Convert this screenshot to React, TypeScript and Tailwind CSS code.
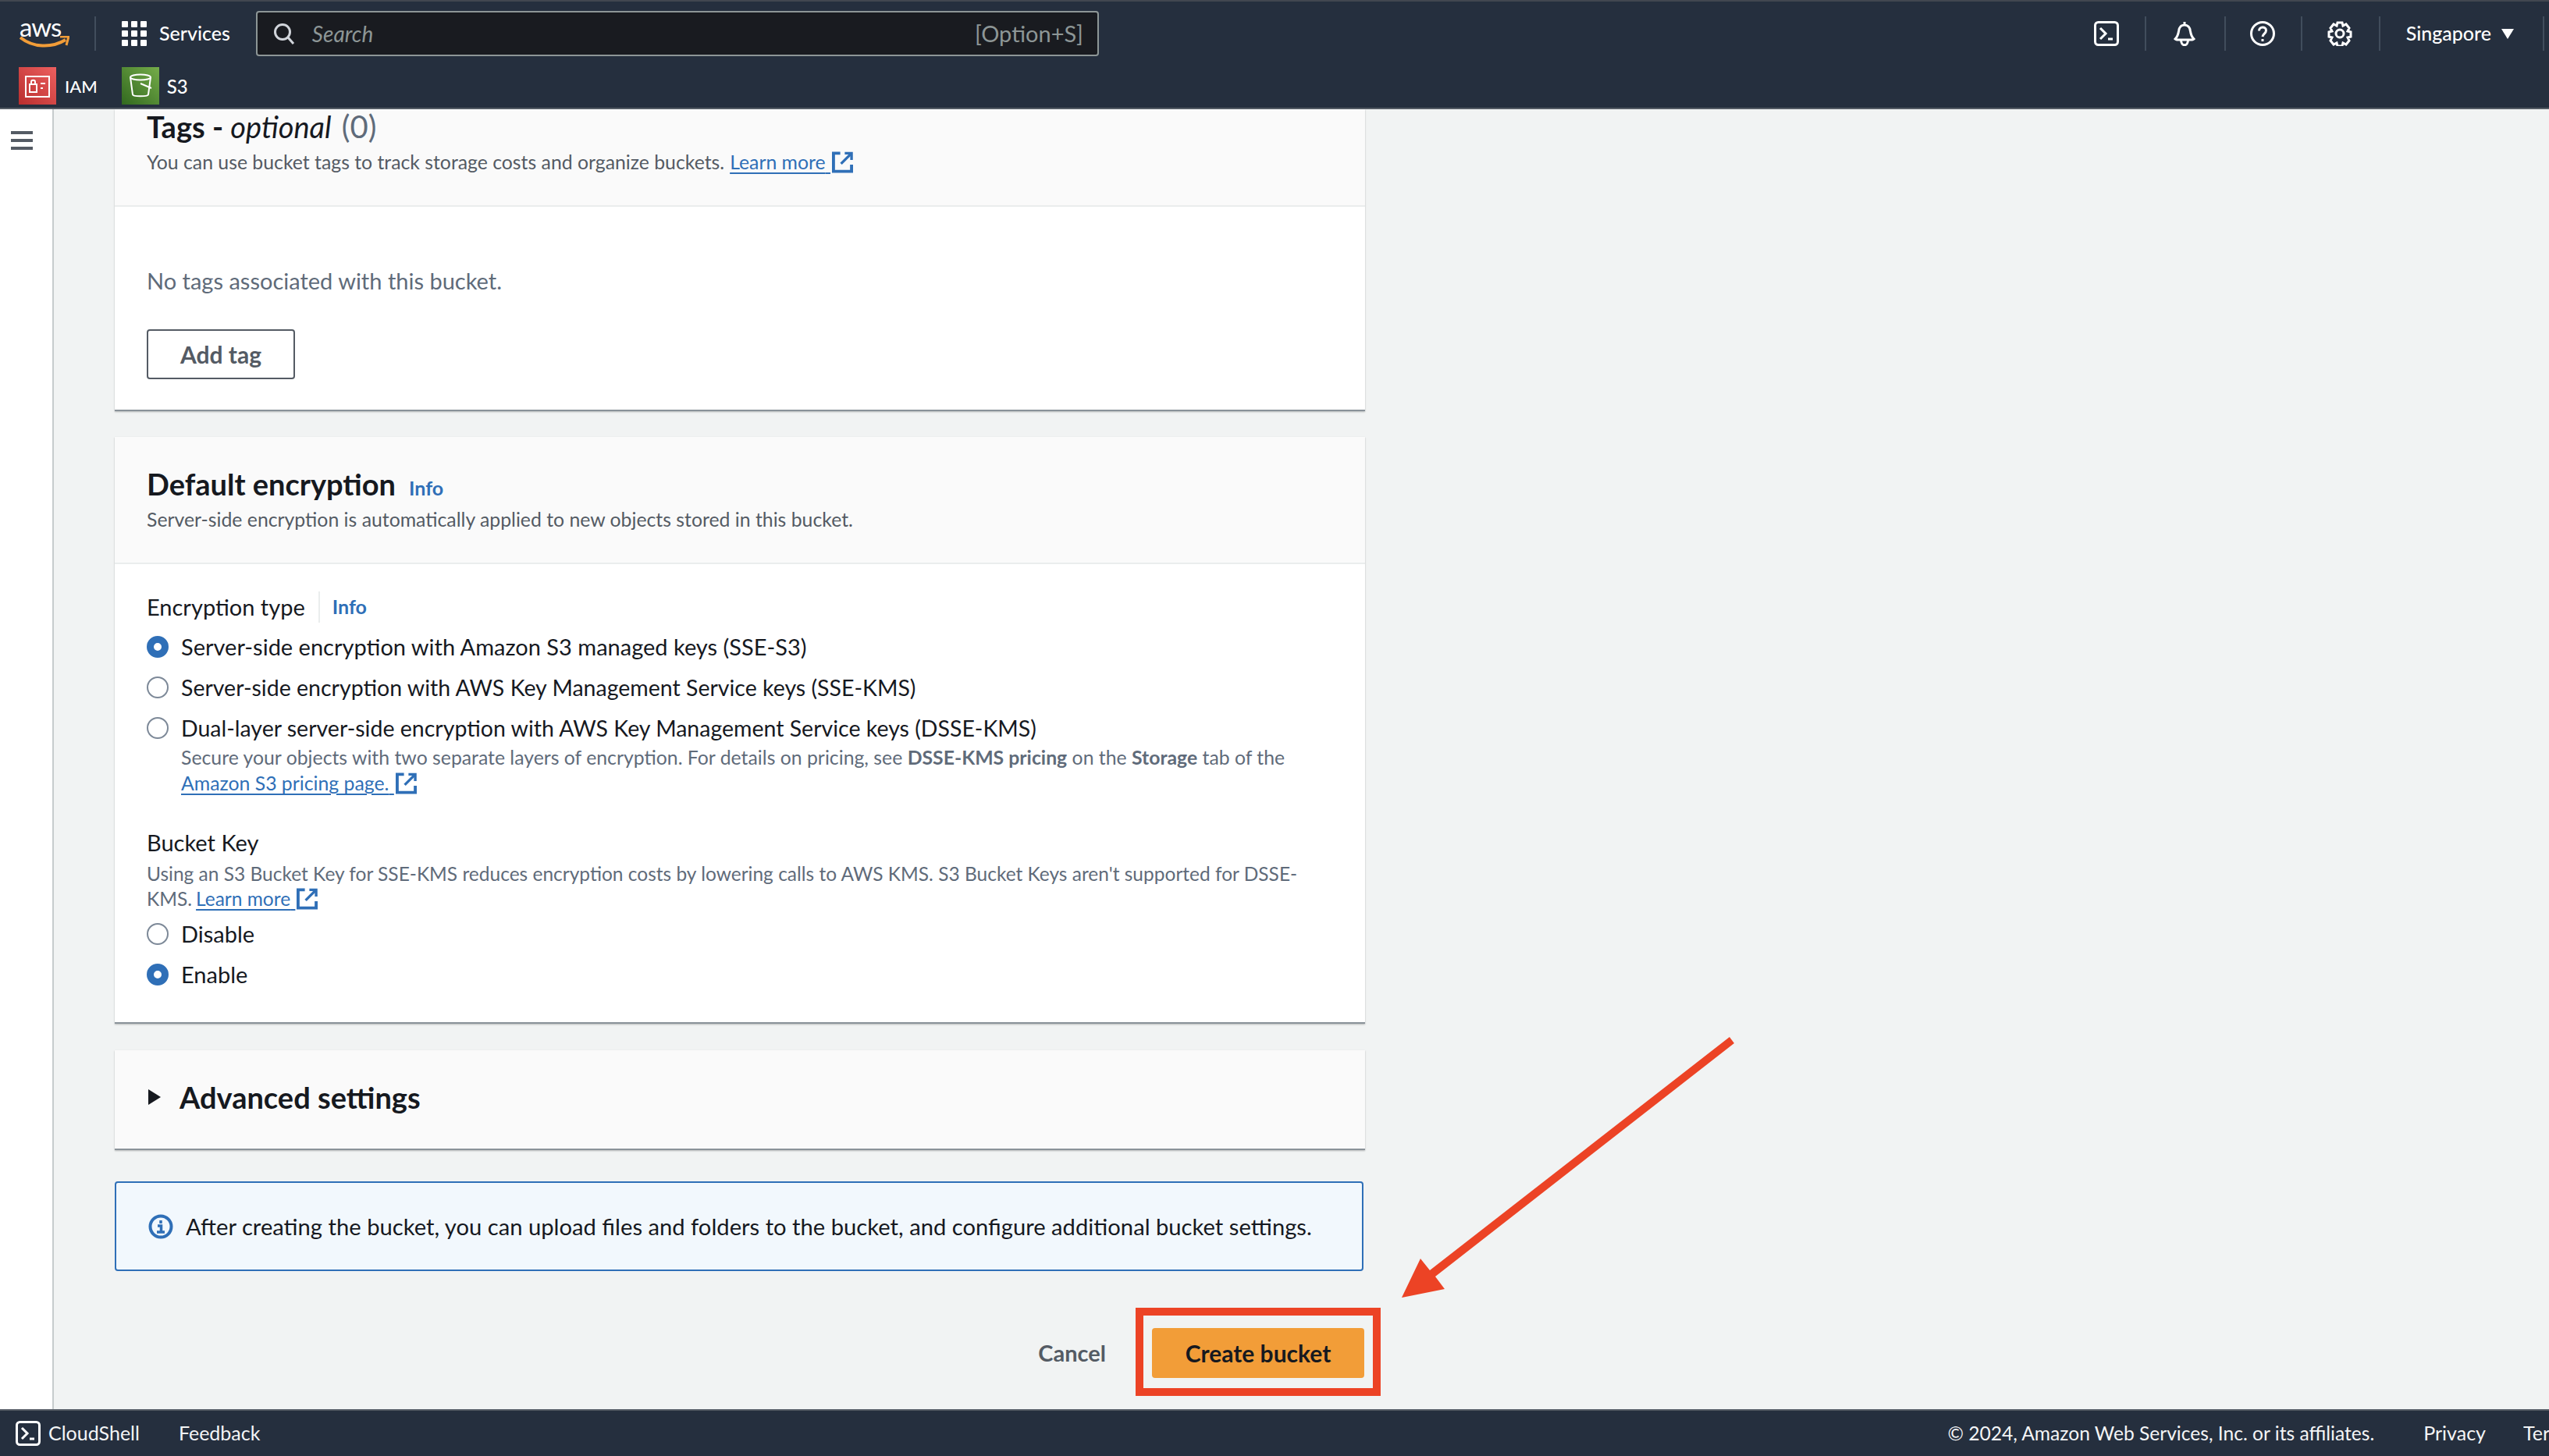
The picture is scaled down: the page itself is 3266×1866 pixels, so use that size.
const sans = "font-['Lato','Liberation_Sans',sans-serif]";

function ExternalIcon({ className }: { className?: string }) {
  return (
    <svg viewBox="0 0 28 28" className={className} fill="none" stroke="#2f6fb7" strokeWidth="4">
      <path d="M11 2H2v24h24v-9" />
      <path d="M17 2h9v9" strokeWidth="3.5" />
      <path d="M25 3 12 16" strokeWidth="3.5" />
    </svg>
  );
}

function LearnMore({ label }: { label: string }) {
  return (
    <span className="inline-flex items-center">
      <span className="text-[#2f6fb7] underline decoration-2 underline-offset-4">{label}{"\u00a0"}</span>
      <ExternalIcon className="ml-[2px] h-[28px] w-[27px]" />
    </span>
  );
}

function Radio({ checked, label, size = "text-[29px]" }: { checked?: boolean; label: string; size?: string }) {
  return (
    <div className="flex h-[52px] items-center">
      {checked ? (
        <span className="h-[28px] w-[28px] rounded-full border-[9px] border-[#2f6fb7] bg-white" />
      ) : (
        <span className="h-[28px] w-[28px] rounded-full border-2 border-[#7d8998] bg-white" />
      )}
      <span className={`ml-[16px] leading-[40px] text-[#16191f] ${size}`}>{label}</span>
    </div>
  );
}

function HeaderDivider({ x }: { x: string }) {
  return <span className={`h-[44px] w-[2px] bg-[#414d5c] ${x}`} />;
}

function GridDots() {
  return (
    <svg viewBox="0 0 32 32" className="h-[32px] w-[32px]" fill="#fff">
      {[0, 12, 24].map((y) =>
        [0, 12, 24].map((x) => <rect key={`${x}-${y}`} x={x} y={y} width="8" height="8" rx="1" />)
      )}
    </svg>
  );
}

function TerminalIcon({ className }: { className?: string }) {
  return (
    <svg viewBox="0 0 32 32" className={className} fill="none" stroke="#fff" strokeWidth="3">
      <rect x="1.5" y="1.5" width="29" height="29" rx="4" />
      <path d="m8 9 7 7-7 7" />
      <path d="M18 23h6" />
    </svg>
  );
}

function TopBar() {
  return (
    <header className="h-[140px] shrink-0 border-t-2 border-b-2 border-t-[#414750] border-b-[#545b64] bg-[#252f3e] text-white">
      <div className="flex h-[82px] items-center">
        <div className="relative ml-[25px] h-[42px] w-[64px]">
          <span className="absolute left-0 top-[-8px] text-[33px] leading-[40px] tracking-[-1px]">aws</span>
          <svg viewBox="0 0 64 18" className="absolute left-0 top-[24px] h-[18px] w-[64px]" fill="none">
            <path d="M1 2c16 13 40 14 58 3" stroke="#f29d38" strokeWidth="4" />
            <path d="M52 1h11l-3 11" stroke="#f29d38" strokeWidth="3" />
          </svg>
        </div>
        <span className="ml-[32px] h-[44px] w-[2px] bg-[#414d5c]" />
        <div className="ml-[33px]">
          <GridDots />
        </div>
        <span className="ml-[16px] text-[25px] font-medium">Services</span>
        <div className="ml-[33px] flex h-[58px] w-[1080px] items-center rounded-[4px] border-2 border-[#8d9696] bg-[#191b20] pl-[20px] pr-[18px]">
          <svg viewBox="0 0 28 28" className="h-[30px] w-[28px]" fill="none" stroke="#d1d5db" strokeWidth="3">
            <circle cx="12" cy="12" r="9.5" />
            <path d="m19 19 7 8" />
          </svg>
          <span className="ml-[22px] flex-1 text-[28px] italic text-[#8d9696]">Search</span>
          <span className="text-[29px] text-[#8d9696]">[Option+S]</span>
        </div>
        <div className="flex-1" />
        <TerminalIcon className="h-[32px] w-[32px]" />
        <HeaderDivider x="ml-[33px]" />
        <svg viewBox="0 0 32 32" className="ml-[33px] h-[32px] w-[32px]" fill="none" stroke="#fff" strokeWidth="3">
          <path d="M16 1v3M4 23c3-3 4-6 4.500-10C9 8 12 5 16 5s7 3 7.500 8c.5 4 1.500 7 4.500 10 0 0-1 1-2 1H6c-1 0-2-1-2-1Z" />
          <path d="M11.500 24c0 9 9 9 9 0" />
        </svg>
        <HeaderDivider x="ml-[35px]" />
        <svg viewBox="0 0 32 32" className="ml-[31px] h-[32px] w-[32px]" fill="none" stroke="#fff" strokeWidth="3">
          <circle cx="16" cy="16" r="14.500" />
          <path d="M11.500 12.500c0-6 9-6 9-.5 0 4-4 4-4.500 8" />
          <path d="M16 23v3" />
        </svg>
        <HeaderDivider x="ml-[33px]" />
        <svg viewBox="0 0 32 32" className="ml-[32px] h-[32px] w-[32px]" fill="none" stroke="#fff" strokeWidth="3">
          <circle cx="16" cy="16" r="5" />
          <path d="m13 2 6 0 1 4 4-2 4 5-2 4 4 1v6l-4 1 2 4-4 5-4-2-1 4h-6l-1-4-4 2-4-5 2-4-4-1v-6l4-1-2-4 4-5 4 2Z" />
        </svg>
        <HeaderDivider x="ml-[34px]" />
        <span className="ml-[33px] text-[25px] font-medium">Singapore</span>
        <span className="ml-[13px] h-0 w-0 border-x-[8px] border-t-[13px] border-x-transparent border-t-white" />
        <span className="ml-[37px] h-[44px] w-[2px] bg-[#414d5c]" />
        <span className="w-[6px]" />
      </div>
      <div className="flex h-[54px] items-start">
        <span className="ml-[24px] mt-[2px] flex h-[48px] w-[48px] items-center justify-center bg-linear-to-tr from-[#b92e2e] to-[#ed5f5f]">
          <svg viewBox="0 0 32 32" className="h-[32px] w-[32px]" fill="none" stroke="#fff" strokeWidth="2">
            <rect x="1" y="4" width="30" height="26" />
            <rect x="6" y="14" width="9" height="10" />
            <path d="M8 14v-3c0-3 5-3 5 0v3M20 13h6M20 19h3" />
          </svg>
        </span>
        <span className="ml-[11px] mt-[11px] text-[22px] font-medium leading-[32px]">IAM</span>
        <span className="ml-[31px] mt-[2px] flex h-[48px] w-[48px] items-center justify-center bg-linear-to-tr from-[#32691f] to-[#75ad4a]">
          <svg viewBox="0 0 32 32" className="h-[38px] w-[32px]" fill="none" stroke="#fff" strokeWidth="2">
            <ellipse cx="16" cy="5" rx="13" ry="3.500" />
            <path d="M3 5l3 22c0 3 20 3 20 0l3-22" />
            <path d="m16 13 14 6" />
          </svg>
        </span>
        <span className="ml-[10px] mt-[11px] text-[24px] font-medium leading-[32px]">S3</span>
      </div>
    </header>
  );
}

function BottomBar() {
  return (
    <footer className="flex h-[60px] shrink-0 items-center whitespace-nowrap border-t-2 border-[#545b64] bg-[#252f3e] text-[25px] text-[#f4f5f6]">
      <TerminalIcon className="ml-[20px] h-[32px] w-[32px]" />
      <span className="ml-[10px]">CloudShell</span>
      <span className="ml-[50px]">Feedback</span>
      <div className="flex-1" />
      <span className="text-[24.600px]">© 2024, Amazon Web Services, Inc. or its affiliates.</span>
      <span className="ml-[63px]">Privacy</span>
      <span className="ml-[48px] w-[33px] overflow-hidden">Terms</span>
    </footer>
  );
}

export default function App() {
  return (
    <div className={`relative flex h-[1866px] w-[3266px] flex-col overflow-hidden bg-[#f1f3f3] ${sans}`}>
      <TopBar />
      <div className="flex min-h-0 flex-1">
        <aside className="w-[69px] shrink-0 border-r-2 border-[#c6cbcd] bg-white pl-[14px] pt-[28px]">
          <div className="flex w-[28px] flex-col gap-[6px]">
            <span className="h-[4px] bg-[#545b64]" />
            <span className="h-[4px] bg-[#545b64]" />
            <span className="h-[4px] bg-[#545b64]" />
          </div>
        </aside>
        <main className="w-[1680px] shrink-0 pl-[78px]">
          {/* tags */}
          <section className="h-[387px] w-[1602px] border-b-2 border-[#8a9299] bg-white shadow-[0_1px_2px_rgba(0,0,0,0.25)]">
            <div className="h-[125px] border-b-2 border-[#eaeded] bg-[#fafafa] pl-[41px]">
              <h2 className="text-[38px] leading-[44px] font-bold text-[#16191f]">
                Tags - <span className="font-normal italic">optional</span>{" "}
                <span className="ml-[4px] text-[40px] font-normal text-[#5f6b7a]">(0)</span>
              </h2>
              <p className="mt-[8px] flex items-center text-[24.800px] leading-[32px] text-[#545b64]">
                <span className="mr-[7px]">You can use bucket tags to track storage costs and organize buckets.</span>
                <LearnMore label="Learn more" />
              </p>
            </div>
            <div className="pl-[41px] pt-[75px]">
              <p className="text-[29px] leading-[40px] text-[#5f6b7a]">No tags associated with this bucket.</p>
              <button className="mt-[42px] h-[64px] w-[190px] rounded-[4px] border-2 border-[#545b64] text-[30px] font-bold text-[#545b64]">
                Add tag
              </button>
            </div>
          </section>

          {/* default encryption */}
          <section className="mt-[33px] h-[752px] w-[1602px] border-b-2 border-[#8a9299] bg-white shadow-[0_1px_2px_rgba(0,0,0,0.25)]">
            <div className="h-[163px] border-b-2 border-[#eaeded] bg-[#fafafa] pl-[41px] pt-[38px]">
              <h2 className="flex items-baseline text-[38px] leading-[44px] font-bold text-[#16191f]">
                Default encryption
                <span className="ml-[17px] text-[25px] font-bold text-[#2f6fb7]">Info</span>
              </h2>
              <p className="mt-[3px] text-[24.800px] leading-[32px] text-[#545b64]">
                Server-side encryption is automatically applied to new objects stored in this bucket.
              </p>
            </div>
            <div className="pl-[41px] pt-[35px]">
              <div className="flex h-[40px] items-center text-[29px] text-[#16191f]">
                Encryption type
                <span className="ml-[17px] h-[40px] w-[2px] bg-[#eaeded]" />
                <span className="ml-[16px] text-[25px] font-bold text-[#2f6fb7]">Info</span>
              </div>
              <div className="mt-[5px]">
                <Radio checked label="Server-side encryption with Amazon S3 managed keys (SSE-S3)" />
                <Radio size="text-[28.500px]" label="Server-side encryption with AWS Key Management Service keys (SSE-KMS)" />
                <Radio size="text-[28.500px]" label="Dual-layer server-side encryption with AWS Key Management Service keys (DSSE-KMS)" />
              </div>
              <div className="-mt-[4px] pl-[44px] text-[24.800px] leading-[32px] text-[#5f6b7a]">
                <p>
                  Secure your objects with two separate layers of encryption. For details on pricing, see{" "}
                  <b>DSSE-KMS pricing</b> on the <b>Storage</b> tab of the
                </p>
                <p className="mt-[1px]">
                  <LearnMore label="Amazon S3 pricing page." />
                </p>
              </div>
              <p className="mt-[40px] text-[29px] leading-[40px] text-[#16191f]">Bucket Key</p>
              <div className="mt-[4px] w-[1500px] text-[24.500px] leading-[32px] text-[#5f6b7a]">
                <p>Using an S3 Bucket Key for SSE-KMS reduces encryption costs by lowering calls to AWS KMS. S3 Bucket Keys aren't supported for DSSE-</p>
                <p className="flex items-center">
                  <span className="mr-[5px]">KMS.</span>
                  <LearnMore label="Learn more" />
                </p>
              </div>
              <div className="mt-[3px]">
                <Radio label="Disable" />
                <Radio checked label="Enable" />
              </div>
            </div>
          </section>

          {/* advanced */}
          <section className="mt-[34px] flex h-[128px] w-[1602px] items-center border-b-2 border-[#8a9299] bg-[#fafafa] pb-[6px] pl-[43px] shadow-[0_1px_2px_rgba(0,0,0,0.25)]">
            <span className="h-0 w-0 border-y-[10px] border-l-[16px] border-y-transparent border-l-[#16191f]" />
            <h2 className="ml-[24px] text-[38px] font-bold text-[#16191f]">Advanced settings</h2>
          </section>

          {/* info */}
          <div className="mt-[40px] flex h-[115px] w-[1600px] items-center rounded-[4px] border-2 border-[#2f6fb7] bg-[#f2f8fd] pl-[41px]">
            <svg viewBox="0 0 32 32" className="h-[32px] w-[32px]" fill="none" stroke="#2f6fb7" strokeWidth="4">
              <circle cx="16" cy="16" r="13.500" />
              <path d="M16 8v4M12 15h4.500v8M11 23h10" strokeWidth="3.500" />
            </svg>
            <p className="ml-[16px] text-[29.200px] text-[#16191f]">
              After creating the bucket, you can upload files and folders to the bucket, and configure additional bucket settings.
            </p>
          </div>

          {/* actions */}
          <div className="mt-[73px] flex w-[1601px] items-center justify-end">
            <span className="mr-[59px] text-[29px] font-bold text-[#545b64]">Cancel</span>
            <div className="relative">
              <button className="h-[64px] w-[272px] rounded-[4px] bg-[#f29d38] text-[30px] font-bold text-[#16191f]">
                Create bucket
              </button>
              <span className="absolute -bottom-[23px] -left-[21px] -right-[21px] -top-[26px] border-[10px] border-[#ec4325]" />
            </div>
          </div>
        </main>
      </div>
      <BottomBar />

      {/* annotation arrow */}
      <svg viewBox="0 0 440 350" className="absolute left-[1790px] top-[1320px] h-[350px] w-[440px]">
        <polygon points="426,9 432,17 49,316 61,332 6,343 30,293 42,308" fill="#ec4325" />
      </svg>
    </div>
  );
}
